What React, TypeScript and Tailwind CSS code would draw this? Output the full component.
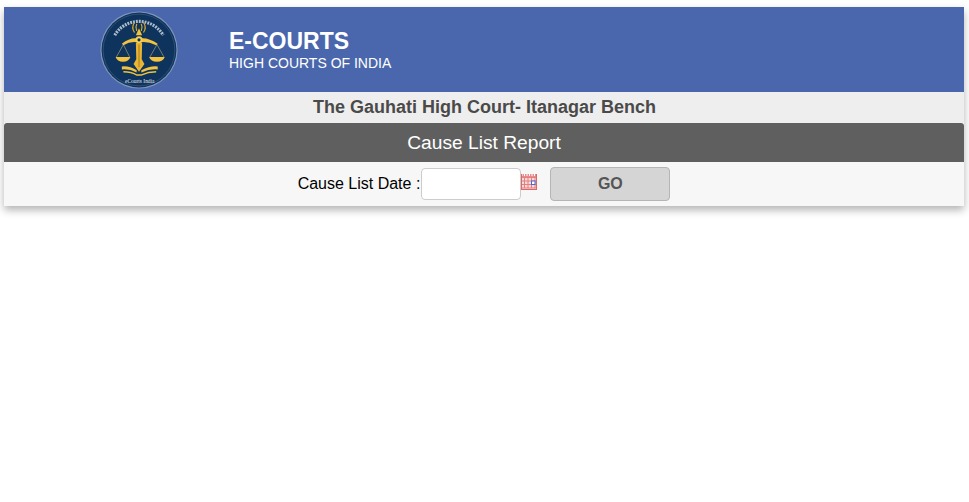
const font = { fontFamily: '"Liberation Sans", Arial, sans-serif' };

function Logo() {
  return (
    <svg width="78" height="78" viewBox="0 0 100 100" className="block">
      <circle cx="50" cy="50" r="49.500" fill="#7f96b8" />
      <circle cx="50" cy="50" r="48" fill="#0e335c" />
      <circle cx="50" cy="50" r="46" fill="none" stroke="#4f6f95" strokeWidth="0.6" />
      <path d="M 19 31 A 36 36 0 0 1 81 31" fill="none" stroke="#d6dee8" strokeWidth="4" strokeDasharray="2.4 1.3" opacity="0.8" />
      <g fill="none" stroke="#d9a92f" strokeWidth="1.500" strokeLinecap="round">
        <path d="M 44 15 Q 40 21 44 27" />
        <path d="M 47 17 Q 45 21 47 25" />
        <path d="M 56 15 Q 60 21 56 27" />
        <path d="M 53 17 Q 55 21 53 25" />
      </g>
      <path d="M 50 22 L 54 31 L 46 31 Z" fill="#f2c33f" />
      <path d="M 28 42 Q 38 34 47 35 L 53 35 Q 62 34 74 42 L 72 44 Q 62 39 53 40 L 47 40 Q 38 39 30 44 Z" fill="#f2c33f" />
      <circle cx="50" cy="37" r="4.500" fill="#f5cf58" />
      <circle cx="50" cy="37" r="2" fill="#0e335c" />
      <path d="M 46 41 L 54 41 L 53.500 62 L 57 68 L 50 78 L 43 68 L 46.500 62 Z" fill="#e9b534" />
      <path d="M 50 43 L 50 72" stroke="#8f6a18" strokeWidth="1" />
      <g fill="none" stroke="#e9d28a" strokeWidth="0.6">
        <path d="M 30 43 L 21 59" />
        <path d="M 30 43 L 38 59" />
        <path d="M 73 43 L 64 59" />
        <path d="M 73 43 L 82 59" />
      </g>
      <path d="M 20 59 L 39 59 Q 37 65 29.500 65 Q 22 65 20 59 Z" fill="#f2c33f" />
      <path d="M 63 59 L 83 59 Q 81 65 73 65 Q 65 65 63 59 Z" fill="#f2c33f" />
      <path d="M 28 71 Q 38 70 47 76 L 47 79 Q 38 74 28 75 Z" fill="#f2c33f" />
      <path d="M 74 71 Q 64 70 53 76 L 53 79 Q 64 74 74 75 Z" fill="#f2c33f" />
      <path d="M 30 77 Q 40 77 47 81 L 53 81 Q 62 77 72 77 L 72 79 Q 62 79 53 83 L 47 83 Q 40 79 30 79 Z" fill="#f2c33f" />
      <text x="51" y="92" textAnchor="middle" fontSize="7" fill="#e6e9ee" style={{ fontFamily: '"Liberation Serif", serif' }}>eCourts India</text>
    </svg>
  );
}

function CalendarIcon() {
  return (
    <svg width="16" height="16" viewBox="0 0 16 16" className="block">
      <rect x="0" y="0" width="16" height="16" fill="#fbd9d9" />
      <rect x="0" y="0" width="16" height="3" fill="#e88a8a" />
      <path d="M1 0v2M3.500 0v2M6 0v2M8.500 0v2M11 0v2M13.500 0v2" stroke="#fff" strokeWidth="1" />
      <path d="M0 3.500h16M0 7h16M0 10.500h16M0 14h16M3.500 3v11M7 3v11M10.500 3v11M14 3v11" stroke="#e57f7f" strokeWidth="1" />
      <path d="M0 15.500h16M.5 0v16M15.500 0v16" stroke="#d96a6a" strokeWidth="1" />
      <rect x="10.500" y="7" width="3.500" height="3.500" fill="#fff" stroke="#3f6fd8" strokeWidth="1" />
    </svg>
  );
}

export default function App() {
  return (
    <div className="min-h-[502px] bg-white pl-1 pr-[5px] pt-[7px]" style={font}>
      <div className="shadow-[0_4px_8px_rgba(0,0,0,0.3)]">
        <header className="flex h-[85px] items-center bg-[#4a67ad] pl-[96px] text-white">
          <Logo />
          <div className="ml-[51px]">
            <div className="text-[23px] font-bold leading-[26px]">E-COURTS</div>
            <div className="mt-px text-[14px] leading-[17px]">HIGH COURTS OF INDIA</div>
          </div>
        </header>
        <div className="flex h-[31px] items-center justify-center bg-[#eeeeee] pl-px text-[18px] font-bold text-[#4a4a4a]">
          The Gauhati High Court- Itanagar Bench
        </div>
        <div className="flex h-[39px] items-center justify-center rounded-t-[3px] bg-[#5f5f5f] pt-px text-[19.200px] text-white">
          Cause List Report
        </div>
        <div className="flex h-[44px] items-center justify-center bg-[#f7f7f7] text-black">
          <label className="text-[16px]">Cause List Date :</label>
          <input
            type="text"
            aria-label="Cause List Date"
            className="ml-px h-[32px] w-[100px] rounded-[4px] border border-[#cccccc] bg-white"
          />
          <span className="mb-[4px] self-center">
            <CalendarIcon />
          </span>
          <button
            type="button"
            className="ml-[13px] h-[34px] w-[120px] rounded-[4px] border border-[#b5b5b5] bg-[#d5d5d5] text-[16px] font-bold text-[#555555]"
          >
            GO
          </button>
        </div>
      </div>
    </div>
  );
}
